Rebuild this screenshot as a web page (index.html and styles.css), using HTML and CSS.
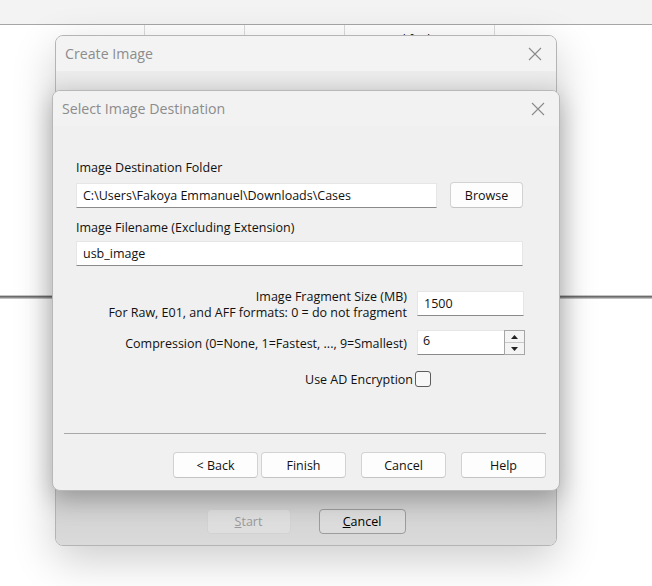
FILE: index.html
```html
<!DOCTYPE html>
<html>
<head>
<meta charset="utf-8">
<link rel="stylesheet" href="styles.css">
</head>
<body>
<div class="app">
  <div class="toolbar"></div>
  <div class="header">
    <div class="hcol h0"></div>
    <div class="hcol h1"><span class="hr">Size</span></div>
    <div class="hcol h2"><span>Type</span></div>
    <div class="hcol h3"><span>Date Modified</span></div>
    <div class="hcol h4"></div>
  </div>
  <div class="list"></div>
  <div class="splitter"></div>
</div>

<div class="win back">
  <div class="titlebar">
    <span class="title">Create Image</span>
    <svg class="close" width="14" height="14" viewBox="0 0 14 14"><path d="M1 1L13 13M13 1L1 13" stroke="#8a8a8a" stroke-width="1.1" fill="none"/></svg>
  </div>
  <div class="back-body"></div>
  <div class="back-footer">
    <button class="btn disabled"><u>S</u>tart</button>
    <button class="btn dim"><u>C</u>ancel</button>
  </div>
</div>

<div class="win front">
  <div class="titlebar">
    <span class="title">Select Image Destination</span>
    <svg class="close" width="14" height="14" viewBox="0 0 14 14"><path d="M1 1L13 13M13 1L1 13" stroke="#8a8a8a" stroke-width="1.1" fill="none"/></svg>
  </div>
  <div class="content">
    <div class="label first">Image Destination Folder</div>
    <div class="row-path">
      <div class="input path">C:\Users\Fakoya Emmanuel\Downloads\Cases</div>
      <button class="btn browse">Browse</button>
    </div>
    <div class="label second">Image Filename (Excluding Extension)</div>
    <div class="input full">usb_image</div>

    <div class="opts">
      <div class="olabel frag">Image Fragment Size (MB)<br>For Raw, E01, and AFF formats: 0 = do not fragment</div>
      <div class="input small">1500</div>
      <div class="olabel comp">Compression (0=None, 1=Fastest, ..., 9=Smallest)</div>
      <div class="spin">
        <div class="spin-val">6</div>
        <div class="spin-btns">
          <div class="sb"><svg width="7" height="4" viewBox="0 0 7 4"><path d="M0 4L3.5 0L7 4Z" fill="#222"/></svg></div>
          <div class="sb"><svg width="7" height="4" viewBox="0 0 7 4"><path d="M0 0L3.5 4L7 0Z" fill="#222"/></svg></div>
        </div>
      </div>
    </div>
    <div class="enc">
      <span>Use AD Encryption</span>
      <span class="check"></span>
    </div>
  </div>
  <div class="sep"></div>
  <div class="footer">
    <button class="btn fb">&lt; Back</button>
    <button class="btn fb">Finish</button>
    <button class="btn fb gap">Cancel</button>
    <button class="btn fb gap">Help</button>
  </div>
</div>
</body>
</html>
```
FILE: styles.css
```css
html, body {
  margin: 0;
  padding: 0;
}
body {
  width: 652px;
  height: 586px;
  overflow: hidden;
  background: #ffffff;
  font-family: "Open Sans", "Noto Sans", sans-serif;
  font-size: 12.5px;
  color: #111;
  position: relative;
}
.app {
  display: flex;
  flex-direction: column;
}
.toolbar {
  height: 24px;
  background: #f3f3f3;
  border-bottom: 1px solid #a6a6a6;
}
.header {
  display: flex;
  height: 26px;
  background: #ffffff;
}
.hcol {
  border-right: 1px solid #dcdcdc;
  box-sizing: border-box;
  padding: 8px 6px 0;
  line-height: 14px;
  font-size: 12px;
  color: #000;
}
.h0 { width: 145px; }
.h1 { width: 100px; text-align: right; }
.h2 { width: 100px; }
.h3 { width: 150px; }
.h4 { flex: 1; border-right: none; }
.list {
  height: 244px;
}
.splitter {
  height: 4px;
  background: linear-gradient(#c6c6c6 0 1px, #6c6c6c 1px 2px, #8e8e8e 2px 3px, #c2c2c2 3px 4px);
}

.win {
  position: absolute;
  box-sizing: border-box;
  border-radius: 8px;
  display: flex;
  flex-direction: column;
  overflow: hidden;
}
.titlebar {
  display: flex;
  align-items: center;
  justify-content: space-between;
  flex-shrink: 0;
}
.title {
  font-size: 14.2px;
  color: #8c8c8c;
  font-family: "Open Sans", "Noto Sans", sans-serif;
}
.close {
  display: block;
}

.back {
  left: 55px;
  top: 35px;
  width: 502px;
  height: 511px;
  border: 1px solid #b4b4b4;
  background: #f3f3f3;
  box-shadow: 0 14px 44px rgba(0, 0, 0, 0.20);
}
.back .titlebar {
  height: 35px;
  padding: 0 14px 0 9px;
  background: #f3f3f3;
}
.back-body {
  flex: 1;
  background: linear-gradient(#ececec, #dcdcdc 12%, #d6d6d6 80%, #d4d4d4);
}
.back-footer {
  display: flex;
  justify-content: center;
  gap: 28px;
  padding: 19px 0 11px;
  background: linear-gradient(#cfcfcf, #dadada);
}
.btn {
  font-family: "Open Sans", "Noto Sans", sans-serif;
  font-size: 12.5px;
  color: #111;
  height: 25px;
  padding: 0;
  box-sizing: border-box;
  border-radius: 4px;
  background: #fdfdfd;
  border: 1px solid #d2d2d2;
  border-bottom-color: #c4c4c4;
}
.btn.disabled {
  width: 84px;
  background: #dedede;
  border-color: #d2d2d2;
  color: #9a9a9a;
}
.btn.dim {
  width: 87px;
  background: #dcdcdc;
  border-color: #9c9c9c;
  color: #000;
}

.front {
  left: 52px;
  top: 90px;
  width: 508px;
  height: 401px;
  border: 1px solid #b8b8b8;
  background: #f0f0f0;
  box-shadow: 0 8px 26px rgba(0, 0, 0, 0.28);
}
.front .titlebar {
  height: 35px;
  padding: 0 14px 0 9px;
  background: #f2f2f2;
}
.content {
  padding: 34px 36px 0 23px;
  display: flex;
  flex-direction: column;
}
.label {
  line-height: 16px;
  height: 16px;
}
.row-path {
  display: flex;
  align-items: center;
  gap: 13px;
  margin-top: 6px;
}
.input {
  box-sizing: border-box;
  height: 25px;
  background: #ffffff;
  border: 1px solid #e6e6e6;
  border-bottom: 1px solid #8a8a8a;
  padding: 0 6px;
  line-height: 23px;
  white-space: nowrap;
  overflow: hidden;
}
.input.path {
  width: 361px;
}
.btn.browse {
  width: 73px;
  height: 26px;
}
.label.second {
  margin-top: 12px;
}
.input.full {
  margin-top: 5px;
  width: 447px;
}

.opts {
  display: grid;
  grid-template-columns: 331px 107px;
  column-gap: 10px;
  margin-top: 23px;
}
.olabel {
  text-align: right;
  line-height: 16px;
  white-space: nowrap;
}
.frag {
  margin-top: 0;
}
.input.small {
  margin-top: 2px;
  width: 107px;
}
.comp {
  margin-top: 15px;
}
.spin {
  margin-top: 9px;
  width: 108px;
  height: 25px;
  box-sizing: border-box;
  display: flex;
  background: #ffffff;
  border: 1px solid #e6e6e6;
  border-bottom: 1px solid #8a8a8a;
}
.spin-val {
  flex: 1;
  padding-left: 5px;
  line-height: 20px;
}
.spin-btns {
  width: 21px;
  box-sizing: border-box;
  border: 1px solid #a6a6a6;
  margin: -1px -1px 0 0;
  height: 25px;
  display: flex;
  flex-direction: column;
  background: #f0f0f0;
}
.sb {
  flex: 1;
  display: flex;
  align-items: center;
  justify-content: center;
  background: #f4f4f4;
}
.sb + .sb {
  border-top: 1px solid #c8c8c8;
}
.enc {
  display: flex;
  justify-content: flex-end;
  align-items: center;
  gap: 2px;
  margin-top: 15px;
  padding-right: 92px;
  height: 18px;
}
.check {
  width: 16px;
  height: 16px;
  box-sizing: border-box;
  border: 1px solid #5c5c5c;
  border-radius: 3px;
  background: #f7f7f7;
}
.sep {
  margin: 45px 13px 0 11px;
  height: 1px;
  background: #a8a8a8;
}
.footer {
  display: flex;
  justify-content: flex-end;
  padding: 18px 13px 0 0;
}
.btn.fb {
  width: 85px;
  height: 26px;
  margin-left: 3px;
}
.btn.fb.gap {
  margin-left: 15px;
}
```
